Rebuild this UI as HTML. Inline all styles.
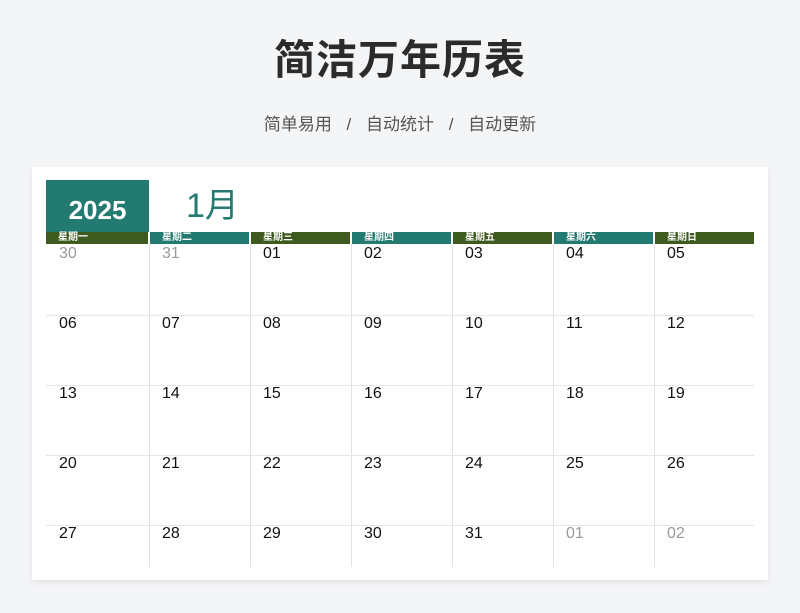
<!DOCTYPE html><html><head><meta charset="utf-8"><style>
body{margin:0;width:800px;height:613px;background:#f4f5f7;font-family:"Liberation Sans","Noto Sans CJK SC",sans-serif;position:relative;overflow:hidden}
.t{position:absolute;top:34px;left:0;width:800px;text-align:center;font-size:41px;font-weight:bold;color:#2b2b2b;line-height:52px;letter-spacing:1px}
.s{position:absolute;top:113px;left:0;width:800px;text-align:center;font-size:17px;color:#555;line-height:24px;word-spacing:10px}
.card{position:absolute;left:32px;top:167px;width:736px;height:413px;background:#fff;box-shadow:0 2px 6px rgba(0,0,0,.08)}
.yr{position:absolute;left:46px;top:180px;width:103px;height:52px;background:#237a70;color:#fff;font-weight:bold;font-size:26px;text-align:center;line-height:60px}
.mo{position:absolute;left:186px;top:184px;font-size:34px;color:#237a70;line-height:44px}
.h{position:absolute;top:232px;height:12px;color:#fff;font-size:10px;font-weight:bold;line-height:12px;padding-left:12px;box-sizing:border-box}
.v{position:absolute;top:244px;width:1px;height:323px;background:#e2e2e2}
.hl{position:absolute;left:46px;width:708px;height:1px;background:#e6e6e6}
.n{position:absolute;font-size:16px;color:#111;line-height:18px}
.g{color:#999}
</style></head><body>
<div class="t">简洁万年历表</div>
<div class="s">简单易用 / 自动统计 / 自动更新</div>
<div class="card"></div>
<div class="yr">2025</div>
<div class="mo">1月</div>
<div class="h" style="left:46px;width:102px;background:#3f5a1f">星期一</div>
<div class="h" style="left:150px;width:99px;background:#237a70">星期二</div>
<div class="h" style="left:251px;width:99px;background:#3f5a1f">星期三</div>
<div class="h" style="left:352px;width:99px;background:#237a70">星期四</div>
<div class="h" style="left:453px;width:99px;background:#3f5a1f">星期五</div>
<div class="h" style="left:554px;width:99px;background:#237a70">星期六</div>
<div class="h" style="left:655px;width:99px;background:#3f5a1f">星期日</div>
<div class="v" style="left:149px"></div><div class="v" style="left:250px"></div><div class="v" style="left:351px"></div><div class="v" style="left:452px"></div><div class="v" style="left:553px"></div><div class="v" style="left:654px"></div>
<div class="hl" style="top:315px"></div><div class="hl" style="top:385px"></div><div class="hl" style="top:455px"></div><div class="hl" style="top:525px"></div>
<div id="nums"></div>
<script>
var xs=[59,162,263,364,465,566,667],ys=[245,315,385,455,525],h='';
var d=[['30','31','01','02','03','04','05'],['06','07','08','09','10','11','12'],['13','14','15','16','17','18','19'],['20','21','22','23','24','25','26'],['27','28','29','30','31','01','02']];
for(var r=0;r<5;r++)for(var c=0;c<7;c++){var g=(r==0&&c<2)||(r==4&&c>4);h+='<div class="n'+(g?' g':'')+'" style="left:'+xs[c]+'px;top:'+ys[r]+'px">'+d[r][c]+'</div>';}
document.getElementById('nums').innerHTML=h;
</script>
</body></html>
